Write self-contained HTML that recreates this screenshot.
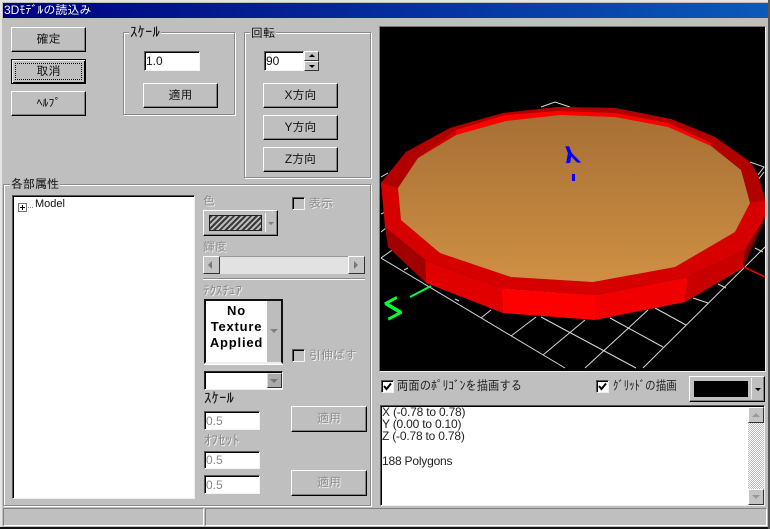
<!DOCTYPE html>
<html lang="ja"><head><meta charset="utf-8">
<style>
html,body{margin:0;padding:0;background:#bfbfbf}
#w{position:relative;width:770px;height:529px;overflow:hidden;background:#bfbfbf;font:12px/14px "Liberation Sans","IPAGothic","Noto Sans CJK JP",sans-serif;color:#111}
#w div{position:absolute;box-sizing:border-box}
.b{background:#bfbfbf;border:1px solid;border-color:#fff #000 #000 #fff;box-shadow:inset -1px -1px 0 #808080;text-align:center;line-height:22px;font-size:12px}
.g{border:1px solid #8a8a8a;box-shadow:1px 1px 0 #fff,inset 1px 1px 0 #fff}
.l{background:#bfbfbf;padding:0 1px;white-space:nowrap;font-size:12px}
.i{background:#fff;border:1px solid;border-color:#555 #f4f4f4 #f4f4f4 #555;box-shadow:inset 1px 1px 0 #000;padding:2px 0 0 1px;font-size:12px;line-height:14px}
.d{color:#8c8c8c;text-shadow:1px 1px 0 #f0f0f0}
.t{white-space:nowrap}
.c{border:1px solid;border-color:#555 #f4f4f4 #f4f4f4 #555;box-shadow:inset 1px 1px 0 #000;width:13px;height:13px}
.s{background:#c4c4c4;border:1px solid;border-color:#fff #333 #333 #fff}
</style></head><body>
<div id="w">
<div style="left:0;top:0;width:770px;height:2px;background:#e4e4e4"></div>
<div style="left:0;top:0;width:2px;height:527px;background:#e4e4e4"></div>
<div style="left:0;top:527px;width:770px;height:2px;background:#111"></div>
<div style="left:768px;top:0;width:2px;height:529px;background:#555"></div>
<div class="t" style="left:3px;top:3px;width:765px;height:15px;background:linear-gradient(90deg,#000080,#0a5ab8);color:#fff;padding-left:1px;line-height:15px">3Dﾓﾃﾞﾙの読込み</div>

<div class="b" style="left:11px;top:27px;width:75px;height:25px">確定</div>
<div class="b" style="left:11px;top:59px;width:75px;height:25px;border:1px solid #000;box-shadow:inset 1px 1px 0 #eee,inset -1px -1px 0 #000;line-height:22px">取消<div style="left:3px;top:3px;right:3px;bottom:3px;border:1px dotted #000"></div></div>
<div class="b" style="left:11px;top:91px;width:75px;height:25px">ﾍﾙﾌﾟ</div>

<div class="g" style="left:123px;top:32px;width:112px;height:83px"></div>
<div class="l" style="left:129px;top:26px;font-size:15px">ｽｹｰﾙ</div>
<div class="i" style="left:144px;top:51px;width:56px;height:20px">1.0</div>
<div class="b" style="left:143px;top:83px;width:75px;height:25px">適用</div>

<div class="g" style="left:244px;top:32px;width:127px;height:146px"></div>
<div class="l" style="left:250px;top:26px">回転</div>
<div class="i" style="left:264px;top:51px;width:40px;height:20px">90</div>
<div class="s" style="left:304px;top:51px;width:15px;height:10px"></div>
<div class="s" style="left:304px;top:61px;width:15px;height:10px"></div>
<div style="left:309px;top:54px;width:0;height:0;border:3px solid transparent;border-top:0;border-bottom:3px solid #000"></div>
<div style="left:309px;top:65px;width:0;height:0;border:3px solid transparent;border-bottom:0;border-top:3px solid #000"></div>
<div class="b" style="left:263px;top:83px;width:75px;height:25px">X方向</div>
<div class="b" style="left:263px;top:115px;width:75px;height:25px">Y方向</div>
<div class="b" style="left:263px;top:147px;width:75px;height:25px">Z方向</div>

<div class="g" style="left:3px;top:184px;width:368px;height:322px"></div>
<div class="l" style="left:10px;top:177px;font-size:12px">各部属性</div>
<div style="left:12px;top:195px;width:183px;height:304px;background:#fff;border:1px solid;border-color:#555 #eee #eee #555;box-shadow:inset 1px 1px 0 #000"></div>
<div style="left:18px;top:203px;width:9px;height:9px;border:1px solid #777;background:#fff"></div>
<div style="left:20px;top:207px;width:5px;height:1px;background:#000"></div>
<div style="left:22px;top:205px;width:1px;height:5px;background:#000"></div>
<div style="left:28px;top:207px;width:5px;border-top:1px dotted #888"></div>
<div class="t" style="left:35px;top:197px;font-size:11px">Model</div>

<div class="t d" style="left:203px;top:194px;font-size:12px">色</div>
<div class="c" style="left:292px;top:197px"></div>
<div class="t d" style="left:309px;top:196px;font-size:12px">表示</div>
<div class="b" style="left:203px;top:210px;width:75px;height:26px"></div>
<div style="left:209px;top:215px;width:53px;height:16px;border:1px solid #222;background:repeating-linear-gradient(135deg,#3a3a3a 0 2px,#bbb 2px 4px)"></div>
<div style="left:265px;top:213px;width:1px;height:19px;background:#f4f4f4"></div>
<div style="left:268px;top:222px;width:0;height:0;border:3px solid transparent;border-bottom:0;border-top:3px solid #808080"></div>
<div class="t d" style="left:203px;top:240px;font-size:12px">輝度</div>
<div style="left:203px;top:256px;width:162px;height:18px;background:#e2e2e2;border-top:1px solid #999"></div>
<div class="s" style="left:203px;top:256px;width:17px;height:18px"></div>
<div class="s" style="left:348px;top:256px;width:17px;height:18px"></div>
<div style="left:208px;top:261px;width:0;height:0;border:4px solid transparent;border-left:0;border-right:4px solid #777"></div>
<div style="left:354px;top:261px;width:0;height:0;border:4px solid transparent;border-right:0;border-left:4px solid #777"></div>
<div style="left:203px;top:278px;width:162px;height:2px;background:#8a8a8a;border-bottom:1px solid #fff"></div>
<div class="t d" style="left:203px;top:284px;font-size:13px">ﾃｸｽﾁｭｱ</div>

<div style="left:204px;top:299px;width:79px;height:65px;background:#fff;border:2px solid #111;border-bottom-color:#eee;box-shadow:0 1px 0 #fff"></div>
<div style="left:267px;top:301px;width:14px;height:61px;background:#bdbdbd"></div>
<div style="left:270px;top:329px;width:0;height:0;border:4px solid transparent;border-bottom:0;border-top:4px solid #808080"></div>
<div style="left:206px;top:303px;width:61px;text-align:center;font:bold 13px/16px 'Liberation Sans',sans-serif;letter-spacing:.8px;color:#000">No<br>Texture<br>Applied</div>
<div class="c" style="left:292px;top:349px"></div>
<div class="t d" style="left:309px;top:348px;font-size:12px">引伸ばす</div>

<div style="left:204px;top:371px;width:79px;height:19px;background:#fff;border:1px solid;border-color:#222 #eee #eee #222;box-shadow:inset 1px 1px 0 #000"></div>
<div class="s" style="left:267px;top:373px;width:15px;height:15px;border-color:#ddd #333 #333 #ddd;background:#aaa"></div>
<div style="left:270px;top:379px;width:0;height:0;border:4px solid transparent;border-bottom:0;border-top:4px solid #777"></div>
<div class="t" style="left:204px;top:392px;font-size:15px">ｽｹｰﾙ</div>
<div class="i d" style="left:204px;top:411px;width:56px;height:19px;text-shadow:none;color:#888">0.5</div>
<div class="b d" style="left:291px;top:406px;width:76px;height:26px;border-color:#fff #000 #000 #fff">適用</div>
<div class="t d" style="left:204px;top:433px;font-size:14px">ｵﾌｾｯﾄ</div>
<div class="i d" style="left:204px;top:451px;width:56px;height:18px;text-shadow:none;color:#888;padding-top:1px">0.5</div>
<div class="i d" style="left:204px;top:475px;width:56px;height:19px;text-shadow:none;color:#888">0.5</div>
<div class="b d" style="left:291px;top:470px;width:76px;height:26px;border-color:#fff #000 #000 #fff">適用</div>

<div style="left:379px;top:26px;width:387px;height:346px;border:1px solid;border-color:#777 #eee #eee #777;overflow:hidden">
<svg width="385" height="344" viewBox="380 27 385 344" style="display:block;background:#000">
<g stroke="#d8d8d8" stroke-width="1" fill="none">
<path d="M381 258L565 368M765 247L643 368M381 258L395 248M541 107L555 102L570 107M750 162L764 167L758 175M764 172L758 180M381 177L388 173"/>
<path d="M481 318L491 310M511 336L536 317M543 355L585 320M585 368L648 310M693 298L708 303M541 317L636 368M610 318L663 347M655 308L686 325M718 284L726 288M755 248L763 252M404 270L408 268M381 214L385 212M381 232L386 228M455 299L459 301"/>
</g>
<g stroke="#ff0000" stroke-width="1.5"><path d="M744 267L765 277"/></g>
<path d="M431 286L410 297" stroke="#00ff40" stroke-width="2" fill="none"/>
<text transform="matrix(-2.46 1.31 .72 2.6 403 313)" font-family="Liberation Sans" font-size="10" font-weight="bold" fill="#00ff30">Z</text>
<polygon points="385,227 425,260 426,283 388,247" fill="#a00000"/>
<polygon points="425,260 501,288 503,313 426,283" fill="#e00000"/>
<polygon points="501,288 595,295 595,320 503,313" fill="#ff0000"/>
<polygon points="595,295 688,277 685,302 595,320" fill="#f00000"/>
<polygon points="688,277 745,250 743,268 685,302" fill="#c80000"/>
<polygon points="745,250 765,217 763,224 743,268" fill="#780000"/>
<polygon points="381,183 406,152 450,128 503,113 558,107 615,108 671,119 715,137 750,162 758,175 765,200 765,217 745,250 688,277 595,295 501,288 425,260 385,227" fill="#d60000"/>
<polygon points="381,183 406,152 450,128 503,113 558,107 615,108 671,119 715,137 750,162 758,175 765,200 750,203 741,170 711,146 668,127 615,117 560,115 506,121 456,135 418,158 398,188" fill="#b00000"/>
<polygon points="418,158 456,130 456,135" fill="#d00000"/>
<polygon points="456,135 456,130 505,115 558,111 615,113 668,123 711,143 711,146 668,127 615,117 560,115 506,121" fill="#ff0000"/>
<defs><linearGradient id="o" x1="0" y1="115" x2="0" y2="282" gradientUnits="userSpaceOnUse"><stop offset="0" stop-color="#a66f35"/><stop offset="1" stop-color="#cf9044"/></linearGradient></defs>
<polygon points="398,188 418,158 456,135 506,121 560,115 615,117 668,127 711,146 741,170 750,203 735,232 675,267 593,282 511,277 440,253 401,220" fill="url(#o)"/>
<text transform="matrix(2.2 -.1 -.9 -2.3 560 147)" font-family="Liberation Sans" font-size="10" font-weight="bold" stroke="#0000ff" stroke-width=".3" fill="#0000ff">Y</text>
<rect x="572" y="174" width="3" height="7" fill="#0000ff"/>
</svg>
</div>

<div style="left:381px;top:380px;width:13px;height:13px;background:#fff;border:1px solid;border-color:#555 #eee #eee #555;box-shadow:inset 1px 1px 0 #000"></div>
<svg width="13" height="13" style="position:absolute;left:381px;top:380px"><path d="M3 6L5.5 9L10 3.5" stroke="#000" stroke-width="2" fill="none"/></svg>
<div class="t" style="left:397px;top:379px;font-size:13px;color:#222;transform:scaleX(.875);transform-origin:left">両面のﾎﾟﾘｺﾞﾝを描画する</div>
<div style="left:596px;top:380px;width:13px;height:13px;background:#fff;border:1px solid;border-color:#555 #eee #eee #555;box-shadow:inset 1px 1px 0 #000"></div>
<svg width="13" height="13" style="position:absolute;left:596px;top:380px"><path d="M3 6L5.5 9L10 3.5" stroke="#000" stroke-width="2" fill="none"/></svg>
<div class="t" style="left:613px;top:379px;font-size:13px;color:#222;transform:scaleX(.82);transform-origin:left">ｸﾞﾘｯﾄﾞの描画</div>
<div class="b" style="left:689px;top:376px;width:76px;height:26px"></div>
<div style="left:694px;top:381px;width:54px;height:16px;background:#000"></div>
<div style="left:751px;top:378px;width:1px;height:21px;background:#eee"></div>
<div style="left:755px;top:388px;width:0;height:0;border:3px solid transparent;border-bottom:0;border-top:3px solid #000"></div>

<div style="left:380px;top:405px;width:385px;height:101px;background:#fff;border:1px solid;border-color:#555 #eee #eee #555;box-shadow:inset 1px 1px 0 #000"></div>
<div style="left:382px;top:406px;font-size:12px;line-height:12.2px;letter-spacing:-.2px;white-space:pre;color:#222">X (-0.78 to 0.78)
Y (0.00 to 0.10)
Z (-0.78 to 0.78)

188 Polygons</div>
<div style="left:748px;top:407px;width:16px;height:98px;background:repeating-conic-gradient(#fff 0 25%,#bbb 0 50%) 0 0/2px 2px"></div>
<div class="s" style="left:748px;top:407px;width:16px;height:16px"></div>
<div class="s" style="left:748px;top:489px;width:16px;height:16px"></div>
<div style="left:752px;top:413px;width:0;height:0;border:4px solid transparent;border-top:0;border-bottom:4px solid #999"></div>
<div style="left:752px;top:495px;width:0;height:0;border:4px solid transparent;border-bottom:0;border-top:4px solid #999"></div>

<div style="left:3px;top:508px;width:201px;height:18px;border:1px solid;border-color:#808080 #fff #fff #808080"></div>
<div style="left:205px;top:508px;width:562px;height:18px;border:1px solid;border-color:#808080 #fff #fff #808080"></div>
</div>
</body></html>
